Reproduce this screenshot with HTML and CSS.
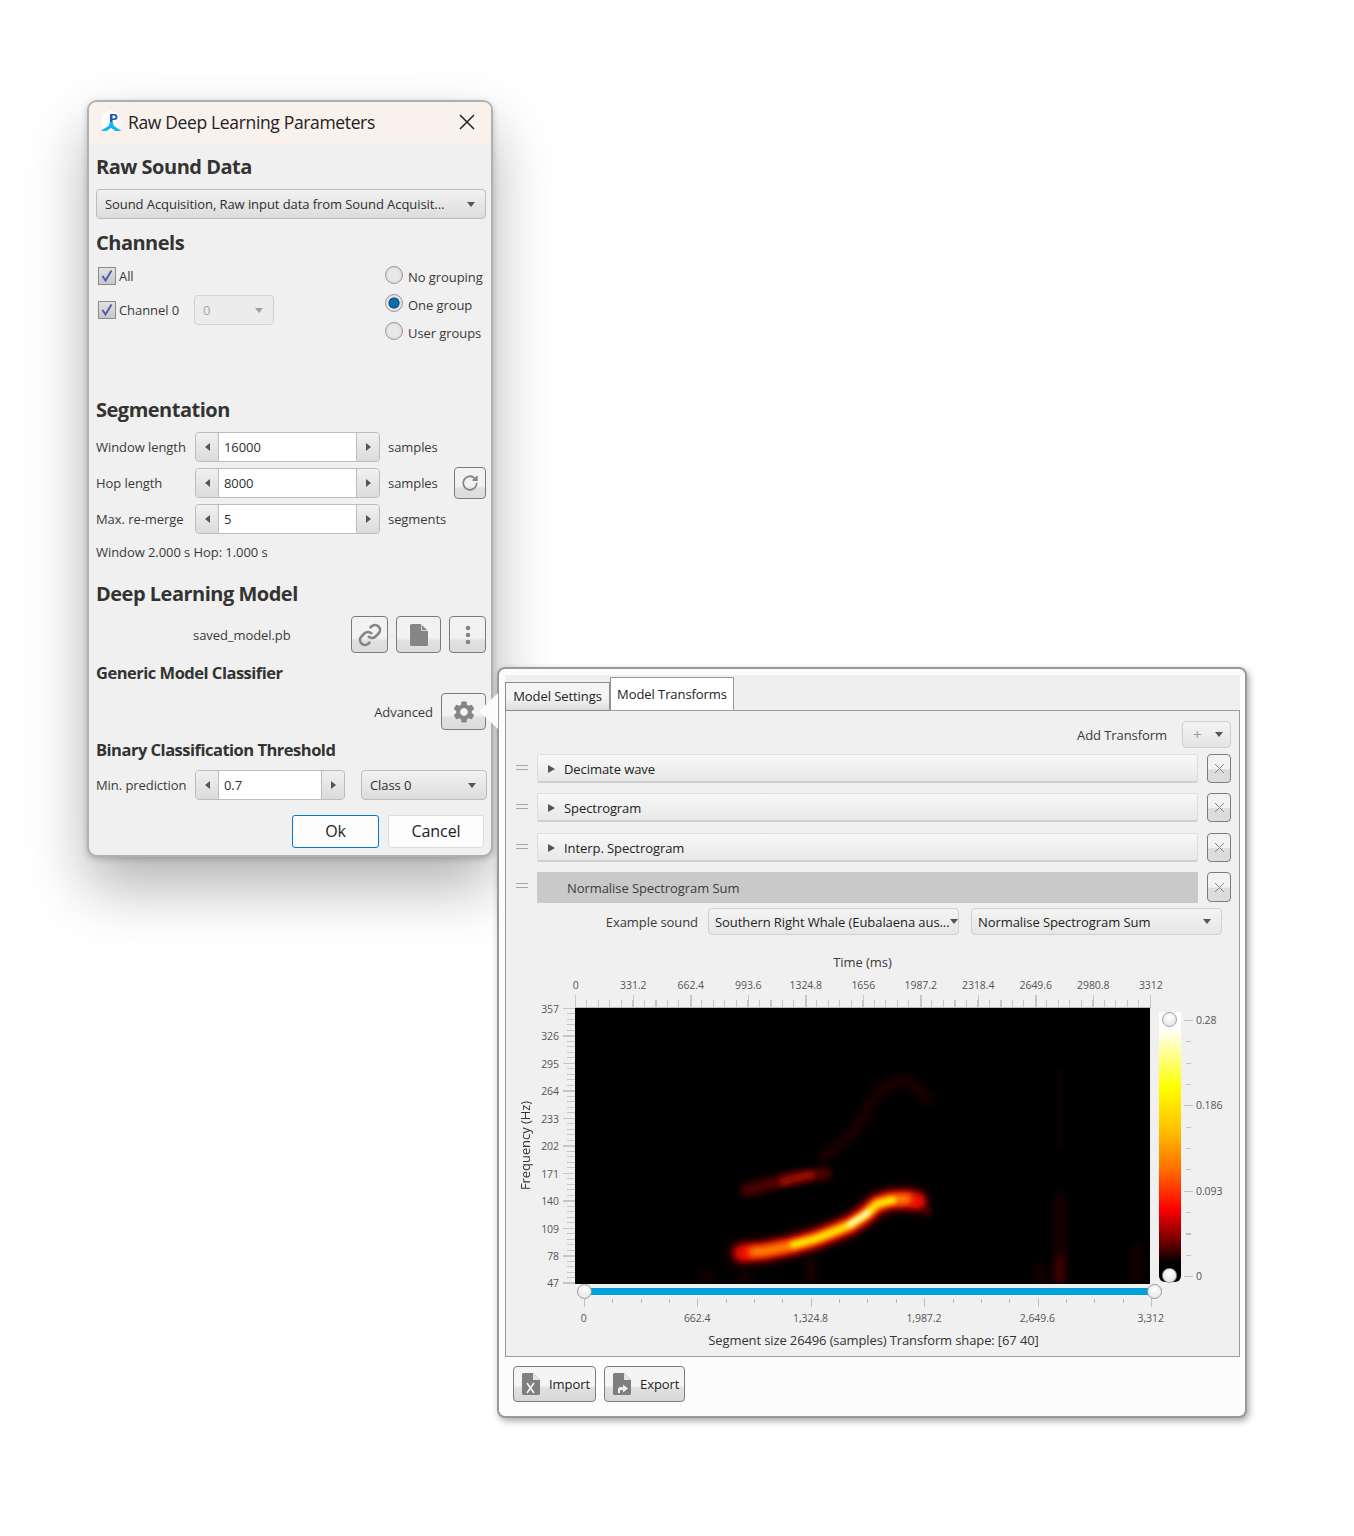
FILE: index.html
```html
<!DOCTYPE html>
<html lang="en">
<head>
    <meta charset="UTF-8">
    <title>Raw Deep Learning Parameters</title>
    <link rel="stylesheet" href="styles.css">
</head>
<body>
    <div class="dialog">
        <div class="titlebar">
            <svg class="logo" viewBox="0 0 22 21">
                <circle cx="11" cy="10" r="10" fill="#fff"/>
                <path d="M10 3h2.500v10H10z" fill="#1f55c8"/>
                <path d="M12 3h2.500a3 3 0 0 1 0 6H12V7.500h2a1 1 0 0 0 0-3h-2z" fill="#1f55c8"/>
                <path d="M10 11h2.500l1.500 4 7.500 5h-6l-4.500-3-4.500 3H.5l8-5z" fill="#12b5ee"/>
            </svg>
            <span class="title-text">Raw Deep Learning Parameters</span>
            <svg class="close" viewBox="0 0 16 16"><path d="M1 1l14 14M15 1L1 15" stroke="#222" stroke-width="1.500" fill="none"/></svg>
        </div>
        <div class="dialog-body">
            <h2>Raw Sound Data</h2>
            <div class="combo combo-wide"><span>Sound Acquisition, Raw input data from Sound Acquisit...</span><i class="arrow-down"></i></div>

            <h2 class="mt-10">Channels</h2>
            <div class="channels">
                <div class="channel-list">
                    <div class="check-row"><span class="checkbox"><svg viewBox="0 0 16 16"><path d="M3.500 8l3 4.500L12.500 2.500" stroke="#4a5fa5" stroke-width="2" fill="none"/></svg></span>All</div>
                    <div class="check-row check-row-2"><span class="checkbox"><svg viewBox="0 0 16 16"><path d="M3.500 8l3 4.500L12.500 2.500" stroke="#4a5fa5" stroke-width="2" fill="none"/></svg></span>Channel 0
                        <div class="combo combo-disabled"><span>0</span><i class="arrow-down"></i></div>
                    </div>
                </div>
                <div class="radio-list">
                    <div class="radio-row"><span class="radio"></span>No grouping</div>
                    <div class="radio-row"><span class="radio radio-on"></span>One group</div>
                    <div class="radio-row"><span class="radio"></span>User groups</div>
                </div>
            </div>

            <h2>Segmentation</h2>
            <div class="form-row mt-8">
                <label>Window length</label>
                <div class="spinner"><b class="spin-btn"><i class="arrow-left"></i></b><span class="spin-field">16000</span><b class="spin-btn"><i class="arrow-right"></i></b></div>
                <span class="unit">samples</span>
            </div>
            <div class="form-row mt-6">
                <label>Hop length</label>
                <div class="spinner"><b class="spin-btn"><i class="arrow-left"></i></b><span class="spin-field">8000</span><b class="spin-btn"><i class="arrow-right"></i></b></div>
                <span class="unit">samples</span>
                <div class="icon-btn refresh-btn">
                    <svg width="18" height="18" viewBox="0 0 24 24" fill="none" stroke="#858585" stroke-width="2.400"><path d="M21 12a9 9 0 1 1-3-6.700L21 8"/><path d="M21 2.500V8h-5.500"/></svg>
                </div>
            </div>
            <div class="form-row mt-6">
                <label>Max. re-merge</label>
                <div class="spinner"><b class="spin-btn"><i class="arrow-left"></i></b><span class="spin-field">5</span><b class="spin-btn"><i class="arrow-right"></i></b></div>
                <span class="unit">segments</span>
            </div>
            <div class="status-line">Window 2.000 s Hop: 1.000 s</div>

            <h2 class="mt-18">Deep Learning Model</h2>
            <div class="model-row">
                <span class="model-name">saved_model.pb</span>
                <div class="icon-btn btn-link">
                    <svg width="24" height="24" viewBox="0 0 24 24" fill="none" stroke="#858585" stroke-width="2.600"><path d="M10 13a5 5 0 0 0 7.540.540l3-3a5 5 0 0 0-7.070-7.070l-1.720 1.710"/><path d="M14 11a5 5 0 0 0-7.540-.540l-3 3a5 5 0 0 0 7.070 7.070l1.710-1.710"/></svg>
                </div>
                <div class="icon-btn btn-file">
                    <svg width="18" height="22" viewBox="0 0 18 22"><path d="M1.500 0H11l7 7v13.500a1.500 1.500 0 0 1-1.500 1.500h-15A1.500 1.500 0 0 1 0 20.500v-19A1.500 1.500 0 0 1 1.500 0z" fill="#858585"/><path d="M11.500 0v6.500H18" fill="none" stroke="#f0f0f0" stroke-width=".8"/></svg>
                </div>
                <div class="icon-btn btn-more">
                    <svg width="6" height="20" viewBox="0 0 6 20" fill="#858585"><circle cx="3" cy="3" r="2.300"/><circle cx="3" cy="10" r="2.300"/><circle cx="3" cy="17" r="2.300"/></svg>
                </div>
            </div>

            <h3>Generic Model Classifier</h3>
            <div class="advanced-row">
                <span>Advanced</span>
                <div class="icon-btn btn-gear">
                    <svg width="26" height="26" viewBox="0 0 24 24" fill="#858585"><path d="M19.140 12.940c.04-.3.06-.61.06-.94 0-.32-.02-.64-.07-.94l2.030-1.580a.49.49 0 0 0 .12-.61l-1.920-3.320a.488.488 0 0 0-.59-.22l-2.390.96c-.5-.38-1.030-.7-1.620-.94l-.36-2.540a.484.484 0 0 0-.48-.41h-3.840c-.24 0-.43.17-.47.41l-.36 2.540c-.59.24-1.130.57-1.620.94l-2.390-.96c-.22-.08-.47 0-.59.22L2.740 8.870c-.12.21-.08.47.12.61l2.030 1.580c-.05.3-.09.63-.09.94s.02.64.07.94l-2.030 1.580a.49.49 0 0 0-.12.61l1.920 3.320c.12.22.37.29.59.22l2.390-.96c.5.38 1.030.7 1.620.94l.36 2.540c.05.24.24.41.48.41h3.840c.24 0 .44-.17.47-.41l.36-2.540c.59-.24 1.130-.56 1.620-.94l2.390.96c.22.08.47 0 .59-.22l1.920-3.320c.12-.22.07-.47-.12-.61l-2.010-1.580zM12 15.600c-1.980 0-3.600-1.620-3.600-3.600s1.620-3.600 3.600-3.600 3.600 1.620 3.600 3.600-1.620 3.600-3.600 3.600z"/></svg>
                </div>
            </div>

            <h3>Binary Classification Threshold</h3>
            <div class="form-row mt-8">
                <label>Min. prediction</label>
                <div class="spinner spinner-short"><b class="spin-btn"><i class="arrow-left"></i></b><span class="spin-field">0.7</span><b class="spin-btn"><i class="arrow-right"></i></b></div>
                <div class="combo combo-class"><span>Class 0</span><i class="arrow-down"></i></div>
            </div>
            <div class="dialog-buttons">
                <div class="push-btn push-ok">Ok</div>
                <div class="push-btn">Cancel</div>
            </div>
        </div>
    </div>

    <div class="popover">
        <div class="popover-arrow"></div>
        <div class="tabpane">
            <div class="tabs">
                <div class="tab">Model Settings</div>
                <div class="tab tab-active">Model Transforms</div>
            </div>
            <div class="tab-content">
                <div class="add-row">
                    <span>Add Transform</span>
                    <div class="add-btn"><span class="plus">+</span><i class="arrow-down"></i></div>
                </div>
                <div class="transforms">
                    <div class="transform-row">
                        <span class="handle"></span>
                        <div class="transform-bar"><i class="arrow-expand"></i>Decimate wave</div>
                        <div class="remove-btn"><svg width="11" height="11" viewBox="0 0 11 11"><path d="M1 1l9 9M10 1l-9 9" stroke="#8a8a8a" fill="none"/></svg></div>
                    </div>
                    <div class="transform-row">
                        <span class="handle"></span>
                        <div class="transform-bar"><i class="arrow-expand"></i>Spectrogram</div>
                        <div class="remove-btn"><svg width="11" height="11" viewBox="0 0 11 11"><path d="M1 1l9 9M10 1l-9 9" stroke="#8a8a8a" fill="none"/></svg></div>
                    </div>
                    <div class="transform-row">
                        <span class="handle"></span>
                        <div class="transform-bar"><i class="arrow-expand"></i>Interp. Spectrogram</div>
                        <div class="remove-btn"><svg width="11" height="11" viewBox="0 0 11 11"><path d="M1 1l9 9M10 1l-9 9" stroke="#8a8a8a" fill="none"/></svg></div>
                    </div>
                    <div class="transform-row transform-open">
                        <span class="handle"></span>
                        <div class="transform-bar">Normalise Spectrogram Sum</div>
                        <div class="remove-btn"><svg width="11" height="11" viewBox="0 0 11 11"><path d="M1 1l9 9M10 1l-9 9" stroke="#8a8a8a" fill="none"/></svg></div>
                    </div>
                </div>
                <div class="example-row">
                    <span>Example sound</span>
                    <div class="combo combo-flat"><span>Southern Right Whale (Eubalaena aus...</span><i class="arrow-down"></i></div>
                    <div class="combo combo-flat combo-gap"><span>Normalise Spectrogram Sum</span><i class="arrow-down"></i></div>
                </div>

                <div class="time-label">Time (ms)</div>
                <div class="x-labels">
                    <span>0</span><span>331.2</span><span>662.4</span><span>993.6</span><span>1324.8</span><span>1656</span><span>1987.2</span><span>2318.4</span><span>2649.6</span><span>2980.8</span><span>3312</span>
                </div>
                <div class="x-ticks"></div>
                <div class="plot-row">
                    <div class="freq-label"><span>Frequency (Hz)</span></div>
                    <div class="y-labels">
                        <span>357</span><span>326</span><span>295</span><span>264</span><span>233</span><span>202</span><span>171</span><span>140</span><span>109</span><span>78</span><span>47</span>
                    </div>
                    <div class="y-ticks"></div>
                    <svg class="plot" viewBox="0 0 575 276">
                        <defs>
                            <filter id="b1" x="-30%" y="-80%" width="160%" height="260%"><feGaussianBlur stdDeviation="2"/></filter>
                            <filter id="b2" x="-30%" y="-80%" width="160%" height="260%"><feGaussianBlur stdDeviation="3"/></filter>
                            <filter id="b3" x="-30%" y="-80%" width="160%" height="260%"><feGaussianBlur stdDeviation="5"/></filter>
                            <filter id="b4" x="-300%" y="-20%" width="700%" height="140%"><feGaussianBlur stdDeviation="5"/></filter>
                        </defs>
                        <rect width="575" height="276" fill="#000"/>
                        <g filter="url(#b4)">
                            <path d="M485 276v-90" stroke="#2a0000" stroke-width="7"/>
                            <path d="M485 276v-26" stroke="#6a0000" stroke-width="7"/>
                            <path d="M465 276v-20" stroke="#240000" stroke-width="7"/>
                            <path d="M562 276v-40" stroke="#1c0000" stroke-width="9"/>
                            <path d="M236 276v-24M132 276v-14M170 276v-12" stroke="#280000" stroke-width="8"/>
                            <path d="M485 60v80" stroke="#0e0000" stroke-width="7"/>
                        </g>
                        <g fill="none" stroke-linecap="round" stroke-linejoin="round">
                            <path d="M248 149C262 140 272 132 282 119S296 88 312 78S332 72 342 80 352 92 352 92" stroke="#200000" stroke-width="10" filter="url(#b3)"/>
                            <path d="M172 182C190 178 205 172 225 169S240 166 250 166" stroke="#4c0000" stroke-width="13" filter="url(#b2)"/>
                            <path d="M208 174C215 171 225 169 236 167" stroke="#a00800" stroke-width="8" filter="url(#b2)"/>
                            <path d="M342 193L354 205" stroke="#4a0000" stroke-width="7" filter="url(#b2)"/>
                            <path d="M166 245L190 243 215 238 240 231 258 224 275 217 290 207 302 196 315 192 330 191 342 193" stroke="#900000" stroke-width="20" filter="url(#b3)"/>
                            <path d="M168 245L190 243 215 238 240 231 258 224 275 217 290 207 302 196 315 192 330 191 342 193" stroke="#f01000" stroke-width="15" filter="url(#b2)"/>
                            <path d="M178 244L190 243 215 238 240 231 258 224 275 217 290 207 302 196 315 192 332 191" stroke="#ff8a00" stroke-width="9" filter="url(#b2)"/>
                            <path d="M218 237L240 231 258 224 275 217 290 207 302 196 318 192" stroke="#ffe600" stroke-width="6.500" filter="url(#b1)"/>
                            <path d="M274 217L294 204" stroke="#fff" stroke-width="3.500" filter="url(#b1)"/>
                        </g>
                    </svg>
                    <div class="colorbar">
                        <span class="thumb thumb-top"></span>
                        <span class="thumb thumb-bottom"></span>
                    </div>
                    <div class="bar-ticks"></div>
                    <div class="bar-labels"><span>0.28</span><span>0.186</span><span>0.093</span><span>0</span></div>
                </div>
                <div class="range">
                    <div class="range-track"></div>
                    <span class="thumb thumb-start"></span>
                    <span class="thumb thumb-end"></span>
                </div>
                <div class="range-ticks"></div>
                <div class="range-labels">
                    <span>0</span><span>662.4</span><span>1,324.8</span><span>1,987.2</span><span>2,649.6</span><span>3,312</span>
                </div>
                <div class="segment-info">Segment size 26496 (samples) Transform shape: [67 40]</div>
            </div>
        </div>
        <div class="popover-foot">
            <div class="foot-btn foot-import">
                <svg width="18" height="22" viewBox="0 0 18 22"><path d="M1.500 0H11l7 7v13.500a1.500 1.500 0 0 1-1.500 1.500h-15A1.500 1.500 0 0 1 0 20.500v-19A1.500 1.500 0 0 1 1.500 0z" fill="#7f7f7f"/><path d="M11 0l7 7h-7z" fill="#e4e4e4"/><path d="M5 10l7 10M12 10l-7 10" stroke="#f0f0f0" stroke-width="1.800"/></svg>
                <span>Import</span>
            </div>
            <div class="foot-btn foot-export">
                <svg width="18" height="22" viewBox="0 0 18 22"><path d="M1.500 0H11l7 7v13.500a1.500 1.500 0 0 1-1.500 1.500h-15A1.500 1.500 0 0 1 0 20.500v-19A1.500 1.500 0 0 1 1.500 0z" fill="#7f7f7f"/><path d="M11 0l7 7h-7z" fill="#e4e4e4"/><path d="M5 20v-3.500a2.500 2.500 0 0 1 2.500-2.500H10v-2.500l5 4-5 4V17H8a1 1 0 0 0-1 1v2z" fill="#f0f0f0"/></svg>
                <span>Export</span>
            </div>
        </div>
    </div>
</body>
</html>
```

FILE: styles.css
```css
* {
    box-sizing: border-box;
}
body {
    margin: 0;
    height: 1536px;
    position: relative;
    background: #fff;
    font-family: "Open Sans", "Noto Sans", sans-serif;
    font-size: 13px;
    color: #3a3a3a;
    letter-spacing: -0.07px;
    overflow: hidden;
}

/* main dialog */
.dialog {
    position: absolute;
    left: 87px;
    top: 100px;
    width: 406px;
    height: 757px;
    border: 2px solid #b0b0b0;
    border-radius: 10px;
    background: #f0f0f0;
    box-shadow: 0 2px 6px rgba(0, 0, 0, 0.2), 0 30px 60px rgba(0, 0, 0, 0.3);
    overflow: hidden;
}
.titlebar {
    height: 42px;
    background: #f9f1ec;
    display: flex;
    align-items: center;
    padding: 0 16px 3px 11px;
}
.logo {
    width: 22px;
    height: 21px;
}
.title-text {
    margin-left: 6px;
    font-size: 17.5px;
    color: #222;
    letter-spacing: -0.35px;
    flex: 1;
}
.close {
    width: 16px;
    height: 16px;
}
.dialog-body {
    padding: 9px 5px 0 7px;
}
h2 {
    margin: 0;
    height: 28px;
    line-height: 28px;
    font-size: 20px;
    font-weight: 700;
    color: #333;
    letter-spacing: -0.5px;
}
h3 {
    margin: 8px 0 0;
    height: 24px;
    line-height: 24px;
    font-size: 16.5px;
    font-weight: 700;
    color: #333;
    letter-spacing: -0.5px;
}
.mt-6 { margin-top: 6px; }
.mt-8 { margin-top: 8px; }
.mt-10 { margin-top: 10px; }
.mt-18 { margin-top: 18px; }

.combo {
    display: flex;
    align-items: center;
    justify-content: space-between;
    height: 30px;
    padding: 0 10px 0 8px;
    border: 1px solid #bcbcbc;
    border-radius: 4px;
    background: linear-gradient(#f2f2f2, #dcdcdc);
    color: #2e2e2e;
    white-space: nowrap;
}
.combo-wide {
    margin-top: 8px;
    width: 390px;
}
.combo-disabled {
    width: 80px;
    margin-left: 15px;
    background: #ececec;
    border-color: #d2d2d2;
    color: #a8a8a8;
}
.combo-disabled .arrow-down {
    border-top-color: #a0a0a0;
}
.combo-class {
    width: 126px;
    margin-left: 16px;
    flex: none;
}
.arrow-down {
    display: block;
    width: 0;
    height: 0;
    border-left: 4.5px solid transparent;
    border-right: 4.5px solid transparent;
    border-top: 5px solid #555;
}
.arrow-left, .arrow-right {
    display: block;
    width: 0;
    height: 0;
    border-top: 4.5px solid transparent;
    border-bottom: 4.5px solid transparent;
}
.arrow-left { border-right: 5px solid #555; }
.arrow-right { border-left: 5px solid #555; }

.channels {
    height: 139px;
    display: flex;
    justify-content: space-between;
}
.channel-list {
    padding: 9px 0 0 2px;
}
.check-row {
    display: flex;
    align-items: center;
    height: 20px;
}
.check-row-2 {
    height: 30px;
    margin-top: 9px;
}
.checkbox {
    width: 18px;
    height: 18px;
    margin-right: 3px;
    border: 1px solid #8b8b8b;
    background: linear-gradient(#e2e2e2, #c6c6c6);
}
.checkbox svg {
    display: block;
    width: 16px;
    height: 16px;
}
.radio-list {
    padding-top: 6px;
    width: 101px;
}
.radio-row {
    display: flex;
    align-items: center;
    height: 28px;
    white-space: nowrap;
}
.radio {
    width: 18px;
    height: 18px;
    margin: -4px 5px 0 0;
    border: 1px solid #9a9a9a;
    border-radius: 50%;
    background: radial-gradient(circle, #e8e8e8 45%, #cfcfcf 100%);
    flex: none;
}
.radio-on {
    background: radial-gradient(circle, #0a6fb2 0 4px, #0d3e68 5px, #e8e8e8 6px, #cfcfcf 100%);
}

.form-row {
    display: flex;
    align-items: center;
    height: 30px;
}
.form-row label {
    width: 99px;
    white-space: nowrap;
    flex: none;
}
.spinner {
    display: flex;
    width: 185px;
    height: 30px;
    border: 1px solid #bcbcbc;
    border-radius: 4px;
    background: #e4e4e4;
    flex: none;
}
.spinner-short {
    width: 150px;
}
.spin-btn {
    width: 22px;
    display: flex;
    align-items: center;
    justify-content: center;
    background: linear-gradient(#f0f0f0, #dcdcdc);
    border-radius: 3px;
    flex: none;
}
.spin-field {
    flex: 1;
    background: #fff;
    border-left: 1px solid #bcbcbc;
    border-right: 1px solid #bcbcbc;
    padding-left: 5px;
    line-height: 29px;
    color: #2e2e2e;
}
.unit {
    margin-left: 8px;
    width: 66px;
    white-space: nowrap;
    flex: none;
}
.icon-btn {
    display: flex;
    align-items: center;
    justify-content: center;
    flex: none;
    border: 1.5px solid #7c7c7c;
    border-radius: 4px;
    background: linear-gradient(#f2f2f2 0 60%, #e0e0e0 68%, #dcdcdc);
}
.refresh-btn {
    width: 32px;
    height: 32px;
}
.status-line {
    margin-top: 8px;
    height: 20px;
    line-height: 20px;
}
.model-row {
    display: flex;
    align-items: center;
    margin-top: 8px;
    height: 37px;
}
.model-name {
    width: 255px;
    padding-left: 97px;
}
.btn-link { width: 37px; height: 37px; }
.btn-file { width: 45px; height: 37px; margin-left: 8px; }
.btn-more { width: 37px; height: 37px; margin-left: 8px; }
.advanced-row {
    display: flex;
    align-items: center;
    justify-content: flex-end;
    margin-top: 8px;
    height: 37px;
}
.btn-gear {
    width: 45px;
    height: 37px;
    margin-left: 8px;
}
.dialog-buttons {
    display: flex;
    justify-content: flex-end;
    gap: 9px;
    margin-top: 15px;
    padding-right: 2px;
}
.push-btn {
    width: 96px;
    height: 33px;
    line-height: 31px;
    text-align: center;
    font-size: 16px;
    color: #222;
    background: #fdfdfd;
    border: 1px solid #dcdcdc;
    border-radius: 3px;
}
.push-ok {
    width: 87px;
    border-color: #0078d4;
}

/* advanced popover */
.popover {
    position: absolute;
    left: 497px;
    top: 667px;
    width: 750px;
    height: 751px;
    padding: 6px 6px 0;
    background: #fcfcfc;
    border: 2px solid #999;
    border-radius: 8px;
    box-shadow: 2px 3px 7px rgba(0, 0, 0, 0.35);
}
.popover-arrow {
    position: absolute;
    left: -20px;
    top: 24px;
    width: 0;
    height: 0;
    border-top: 18px solid transparent;
    border-bottom: 18px solid transparent;
    border-right: 19px solid #fcfcfc;
}
.tabpane {
    width: 735px;
    height: 682px;
    background: #efefef;
}
.tabs {
    height: 35px;
    display: flex;
    align-items: flex-end;
}
.tab {
    width: 105px;
    height: 29px;
    margin-bottom: -1px;
    line-height: 27px;
    text-align: center;
    color: #222;
    border: 1.5px solid #8e8a8e;
    background: linear-gradient(#f4f4f4 0 55%, #dcdcdc);
    white-space: nowrap;
}
.tab-active {
    width: 124px;
    height: 33px;
    margin-bottom: 0;
    line-height: 33px;
    background: #fff;
    border-color: #999;
    border-bottom: none;
    position: relative;
    z-index: 1;
}
.tab-content {
    height: 647px;
    border: 1.5px solid #9c9c9c;
    background: #f0f0f0;
}
.add-row {
    display: flex;
    align-items: center;
    justify-content: flex-end;
    height: 27px;
    margin-top: 10px;
    padding-right: 8px;
}
.add-btn {
    display: flex;
    align-items: center;
    justify-content: space-between;
    width: 49px;
    height: 27px;
    margin-left: 15px;
    padding: 0 7px 0 10px;
    border: 1px solid #cfcfcf;
    border-radius: 4px;
    background: linear-gradient(#f4f4f4, #e4e4e4);
}
.plus {
    color: #9a9a9a;
    font-size: 15px;
    line-height: 15px;
}
.transforms {
    margin-top: 6px;
    padding-right: 8px;
}
.transform-row {
    display: flex;
    align-items: center;
    height: 29px;
    margin-bottom: 10px;
}
.transform-row:nth-child(2) {
    margin-bottom: 11px;
}
.transform-open {
    height: 30px;
    margin-bottom: 0;
}
.handle {
    width: 12px;
    height: 5px;
    margin: -3px 9px 0 10px;
    border-top: 1.5px solid #a8a8a8;
    border-bottom: 1.5px solid #a8a8a8;
    flex: none;
}
.transform-bar {
    flex: 1;
    height: 29px;
    display: flex;
    align-items: center;
    padding: 1px 0 0 10px;
    color: #222;
    border: 1px solid #dedede;
    border-bottom: 2px solid #cfcfcf;
    border-radius: 2px;
    background: linear-gradient(#f8f8f8, #e8e8e8);
}
.arrow-expand {
    display: block;
    width: 0;
    height: 0;
    margin-right: 9px;
    border-top: 4.5px solid transparent;
    border-bottom: 4.5px solid transparent;
    border-left: 7px solid #555;
}
.transform-open .transform-bar {
    height: 31px;
    padding-left: 30px;
    background: #c9c9c9;
    border: none;
    border-radius: 0;
    color: #3c3c3c;
}
.remove-btn {
    width: 24px;
    height: 100%;
    margin-left: 9px;
    display: flex;
    align-items: center;
    justify-content: center;
    flex: none;
    border: 1.5px solid #7c7c7c;
    border-radius: 4px;
    background: linear-gradient(#f2f2f2 0 50%, #dcdcdc 55%);
}
.example-row {
    display: flex;
    align-items: center;
    justify-content: flex-end;
    margin-top: 6px;
    height: 27px;
    padding-right: 17px;
}
.combo-flat {
    width: 251px;
    height: 27px;
    margin-left: 10px;
    padding: 0 10px 0 6px;
    background: linear-gradient(#f4f4f4, #e6e6e6);
    border-color: #d0d0d0;
    color: #222;
}
.combo-gap {
    margin-left: 12px;
}

/* chart */
.time-label {
    margin: 17px 0 0 69px;
    width: 575px;
    height: 20px;
    line-height: 20px;
    text-align: center;
}
.x-labels {
    display: flex;
    margin: 5px 0 0 41px;
    width: 632.5px;
    height: 16px;
    line-height: 16px;
    font-size: 10.5px;
    color: #555;
}
.x-labels span {
    flex: 1;
    text-align: center;
}
.x-ticks {
    margin-left: 69px;
    width: 576px;
    height: 15px;
    border-bottom: 1px solid #b8b8b8;
    background:
        repeating-linear-gradient(to right, #c6c6c6 0 1.5px, transparent 1.5px 57.5px) bottom / 100% 12px no-repeat,
        repeating-linear-gradient(to right, #c6c6c6 0 1px, transparent 1px 11.5px) bottom / 100% 7px no-repeat;
}
.plot-row {
    display: flex;
    height: 276px;
}
.freq-label {
    width: 32px;
    margin-left: 3px;
    display: flex;
    align-items: center;
    justify-content: center;
}
.freq-label span {
    writing-mode: vertical-rl;
    transform: rotate(180deg);
    white-space: nowrap;
    color: #333;
}
.y-labels {
    width: 18px;
    margin-top: -12px;
    font-size: 10.5px;
    color: #555;
    text-align: right;
}
.y-labels span {
    display: block;
    height: 27.45px;
    line-height: 27.45px;
}
.y-ticks {
    width: 12px;
    height: 277px;
    margin-left: 4px;
    background:
        repeating-linear-gradient(to bottom, #c6c6c6 0 1.5px, transparent 1.5px 27.45px) right / 12px 100% no-repeat,
        repeating-linear-gradient(to bottom, #c6c6c6 0 1px, transparent 1px 5.49px) right / 8px 100% no-repeat;
}
.plot {
    width: 575px;
    height: 276px;
    display: block;
    flex: none;
}
.colorbar {
    position: relative;
    width: 22px;
    height: 270px;
    margin: 4px 0 0 9px;
    border-radius: 2px 2px 6px 6px;
    background: linear-gradient(#fff 0, #fff 6%, #ffff00 28%, #ffc000 44%, #ff7000 58%, #ff0000 73%, #700000 85%, #000 93%);
    flex: none;
}
.thumb {
    position: absolute;
    width: 15px;
    height: 15px;
    border: 1.5px solid #9a9a9a;
    border-radius: 50%;
    background: radial-gradient(circle at 50% 35%, #fff, #e0e0e0);
}
.thumb-top { left: 3px; top: 0; }
.thumb-bottom { left: 3px; top: 256px; }
.bar-ticks {
    width: 9px;
    height: 258px;
    margin: 12px 0 0 3px;
    background:
        repeating-linear-gradient(to bottom, #c0c0c0 0 1px, transparent 1px 85.4px) left / 9px 100% no-repeat,
        repeating-linear-gradient(to bottom, #c0c0c0 0 1px, transparent 1px 21.35px) 2px 0 / 5px 100% no-repeat;
}
.bar-labels {
    margin: -30px 0 0 3px;
    font-size: 10.5px;
    color: #555;
}
.bar-labels span {
    display: block;
    height: 85.4px;
    line-height: 85.4px;
}
.range {
    position: relative;
    width: 571px;
    height: 14px;
    margin-left: 78px;
    padding-top: 4px;
}
.range-track {
    height: 7px;
    background: #00a0d8;
}
.thumb-start { left: -7px; top: 0; }
.thumb-end { right: -7px; top: 0; }
.range-ticks {
    width: 570px;
    height: 9px;
    margin-left: 78px;
    background:
        repeating-linear-gradient(to right, #c0c0c0 0 1px, transparent 1px 113.4px) top / 100% 9px no-repeat,
        repeating-linear-gradient(to right, #b8b8b8 0 1px, transparent 1px 28.35px) 0 1px / 100% 4px no-repeat;
}
.range-labels {
    display: flex;
    width: 680.4px;
    height: 16px;
    margin: 3px 0 0 21px;
    line-height: 16px;
    font-size: 10.5px;
    color: #555;
}
.range-labels span {
    flex: 1;
    text-align: center;
}
.segment-info {
    margin-top: 4px;
    padding-left: 2px;
    height: 20px;
    line-height: 20px;
    text-align: center;
    color: #333;
    letter-spacing: -0.12px;
}
.popover-foot {
    display: flex;
    gap: 8px;
    padding: 9px 0 0 8px;
}
.foot-btn {
    display: flex;
    align-items: center;
    height: 36px;
    padding-left: 8px;
    color: #222;
    border: 1.5px solid #7c7c7c;
    border-radius: 4px;
    background: linear-gradient(#f4f4f4 0 55%, #e0e0e0 62%, #d8d8d8);
}
.foot-btn span {
    margin-left: 9px;
}
.foot-import { width: 83px; }
.foot-export { width: 81px; }
```
